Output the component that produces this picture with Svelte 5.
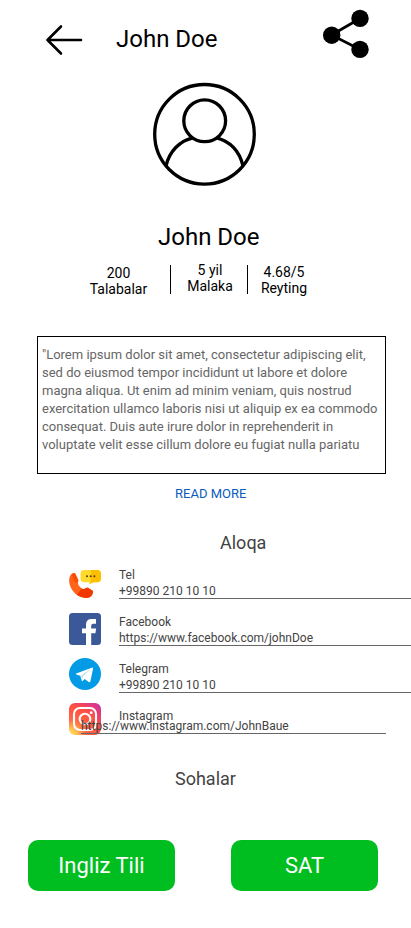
<script>
  const stats = [
    { value: '200', label: 'Talabalar', cls: 'students' },
    { value: '5 yil', label: 'Malaka', cls: 'experience' },
    { value: '4.68/5', label: 'Reyting', cls: 'rating' }
  ];
  const bio = [
    '"Lorem ipsum dolor sit amet, consectetur adipiscing elit,',
    'sed do eiusmod tempor incididunt ut labore et dolore',
    'magna aliqua. Ut enim ad minim veniam, quis nostrud',
    'exercitation ullamco laboris nisi ut aliquip ex ea commodo',
    'consequat. Duis aute irure dolor in reprehenderit in',
    'voluptate velit esse cillum dolore eu fugiat nulla pariatu'
  ];
  const contacts = [
    { name: 'Tel', value: '+99890 210 10 10' },
    { name: 'Facebook', value: 'https://www.facebook.com/johnDoe' },
    { name: 'Telegram', value: '+99890 210 10 10' }
  ];
  const subjects = ['Ingliz Tili', 'SAT'];
</script>

<main>
  <header>
    <svg class="back" width="38" height="32" viewBox="0 0 38 32" aria-label="Back">
      <path d="M16 2.500 2.500 16 16 29.500M2.500 16H36" fill="none" stroke="#000" stroke-width="2.600" stroke-linecap="round" stroke-linejoin="round" />
    </svg>
    <h1>John Doe</h1>
    <svg class="share" width="48" height="50" viewBox="0 0 48 50" aria-label="Share">
      <path d="M38 9.500 9.500 26 38 40.500" fill="none" stroke="#000" stroke-width="2.700" />
      <circle cx="38" cy="9.400" r="8.700" /><circle cx="9.700" cy="26.200" r="8.700" /><circle cx="38" cy="40.400" r="8.700" />
    </svg>
  </header>

  <svg class="avatar" width="105" height="105" viewBox="0 0 105 105">
    <g fill="none" stroke="#000" stroke-width="3.300">
      <circle cx="52.500" cy="52.300" r="49.800" />
      <circle cx="52.700" cy="38.800" r="20.900" />
      <path d="M14 83.800C17.500 69.300 27.500 58.800 41 55.800M64.500 55.800C78 59.300 87.500 69.300 91 83.800" />
    </g>
  </svg>

  <h2>John Doe</h2>

  <div class="stats">
    {#each stats as s}
      <div class="stat {s.cls}"><span>{s.value}</span><span>{s.label}</span></div>
    {/each}
  </div>

  <div class="bio">
    {#each bio as line}<div>{line}</div>{/each}
  </div>
  <a class="more" href="#more">READ MORE</a>

  <h3 class="contact-title">Aloqa</h3>

  <section class="contacts">
    <div class="icons">
      <svg width="32" height="32" viewBox="0 0 32 32">
        <path d="M15 2h13q4 0 4 4v4.300q0 4-4 4h-3.500L20.500 16l.3-1.700H15q-3.500 0-3.500-4V6q0-4 3.500-4Z" fill="#ffda2d" />
        <path d="M22 2h6q4 0 4 4v4.300q0 4-4 4h-3.500L20.500 16l.3-1.700H22Z" fill="#fdbf00" />
        <g fill="#54361d"><circle cx="18" cy="8.300" r="1" /><circle cx="21.700" cy="8.300" r="1" /><circle cx="25.400" cy="8.300" r="1" /></g>
        <path d="M2.200 6.300 5.200 5 9.200 14.500Q8.500 15.600 9.800 17.500 11.800 20.300 14.500 21.300L18 19.700 24 23.300 23.500 26.500Q21.500 30 17 30 8.500 29.500 3.500 22.500C-.5 16.500-.9 10 2.200 6.300Z" fill="#ff641a" />
        <path d="m2.500 6.100 2.300-1.100q1.100-.4 1.600.7l3 6.300q.5 1.200-.6 1.700l-2.300 1.100Z" fill="#ff4b00" />
        <path d="M7.700 26.700 12.700 20.500q1.600 1 2.800.3l2-1.100q.9-.5 1.700 0l4.300 2.800q1 .6.5 1.700-1.400 5.800-7 5.800-4.900-.1-9.300-3.300Z" fill="#f03800" />
      </svg>
      <svg width="32" height="32" viewBox="0 0 32 32">
        <rect width="32" height="32" rx="3.500" fill="#3b5999" />
        <path d="M17 32V20.300h-4V15.500h4v-3.800Q17 6 22.500 6H27v4.800h-2.800q-2 0-2 2v2.700h5l-.8 4.800h-4.200V32Z" fill="#fff" />
      </svg>
      <svg width="32" height="32" viewBox="0 0 32 32">
        <circle cx="16" cy="16" r="16" fill="#039be5" />
        <path d="M7.200 15.600 22.700 9.700q1.500-.4 1.300 1.200L21.400 23.300q-.4 1.300-1.700.6l-4-3-2.100 2.200q-.6.500-.8-.4l-1.500-5-4-1.200q-1-.4-.1-.9Z" fill="#fff" />
        <path d="m12.300 17.600 8.500-6.100q.8-.3.300.3l-7.300 6.800-.5 3.600Z" fill="#b5dff4" />
      </svg>
      <svg width="32" height="32" viewBox="0 0 32 32">
        <defs>
          <radialGradient id="insta" cx="0.040" cy="1" r="1.350">
            <stop offset="0" stop-color="#ffe264" /><stop offset=".13" stop-color="#ffc653" />
            <stop offset=".36" stop-color="#ff6845" /><stop offset=".66" stop-color="#ff5044" />
            <stop offset=".82" stop-color="#e83c72" /><stop offset="1" stop-color="#c032b0" />
          </radialGradient>
        </defs>
        <rect width="32" height="32" rx="6" fill="url(#insta)" />
        <g fill="none" stroke="#fff" stroke-width="2.100"><rect x="5" y="5" width="22" height="22" rx="6" /><circle cx="16" cy="16" r="5.300" /></g>
        <circle cx="22.200" cy="9.700" r="1.400" fill="#fff" />
      </svg>
    </div>
    <div class="fields">
      {#each contacts as c}
        <div class="field"><span>{c.name}</span><span class="value">{c.value}</span></div>
      {/each}
      <div class="field insta"><span>Instagram</span></div>
    </div>
    <div class="insta-value">https://www.instagram.com/JohnBaue</div>
  </section>

  <h3 class="subject-title">Sohalar</h3>
  <div class="subjects">
    {#each subjects as subject}<button>{subject}</button>{/each}
  </div>
</main>

<style>
  :global(body) { margin: 0; background: #fff; }
  main { width: 411px; height: 928px; overflow: hidden; box-sizing: border-box; background: #fff; color: #000; font-family: Roboto, sans-serif; display: flex; flex-direction: column; }
  svg { display: block; flex: none; }
  h1, h2, h3 { margin: 0; font-weight: 400; white-space: nowrap; }
  header { display: flex; align-items: flex-start; height: 82px; padding-left: 45px; flex: none; }
  .back { margin-top: 24px; }
  h1 { font-size: 24px; line-height: 28px; margin: 25px 0 0 33px; width: 190px; }
  .share { margin: 9px 0 0 16px; }
  .avatar { margin-left: 152px; }
  h2 { font-size: 24px; line-height: 28px; margin: 36px 0 0 158px; }
  .stats { display: flex; height: 32px; margin: 13px 0 0 67px; font-size: 14px; line-height: 16px; flex: none; }
  .stat { display: flex; flex-direction: column; align-items: center; box-sizing: border-box; white-space: nowrap; }
  .students { width: 103px; padding-top: 1px; }
  .experience { width: 78px; height: 29px; margin-top: 1px; padding-left: 2px; border: solid #000; border-width: 0 1px; }
  .experience span { position: relative; top: -3px; }
  .rating { width: 72px; }
  .bio { box-sizing: border-box; width: 349px; height: 138px; margin: 40px 0 0 37px; border: 1px solid #000; padding: 9px 4px; font-size: 13px; line-height: 18px; color: #666; white-space: nowrap; flex: none; }
  .more { margin: 12px 0 0 175px; font-size: 13px; line-height: 16px; color: #0d5bbd; text-decoration: none; }
  h3 { font-size: 18px; line-height: 22px; color: #434343; }
  .contact-title { margin: 30px 0 0 220px; }
  .contacts { position: relative; display: flex; height: 182px; margin-top: 13px; color: #434343; font-size: 12px; line-height: 16px; flex: none; }
  .icons { display: flex; flex-direction: column; gap: 13px; margin-left: 69px; padding-top: 1px; width: 50px; }
  .fields { flex: 1; display: flex; flex-direction: column; gap: 15px; }
  .field { display: flex; flex-direction: column; height: 32px; box-sizing: border-box; border-bottom: 1px solid #666; white-space: nowrap; }
  .field.insta { border: 0; }
  .value { line-height: 16px; }
  .insta-value { position: absolute; left: 81px; top: 151px; width: 305px; height: 16px; border-bottom: 1px solid #666; box-sizing: border-box; }
  .subject-title { margin: 19px 0 0 175px; }
  .subjects { display: flex; gap: 56px; margin: 50px 0 0 28px; }
  button { width: 147px; height: 51px; padding: 0; border: 0; border-radius: 10px; background: #00be20; color: #fff; font: 400 22px/26px Roboto, sans-serif; }
</style>
